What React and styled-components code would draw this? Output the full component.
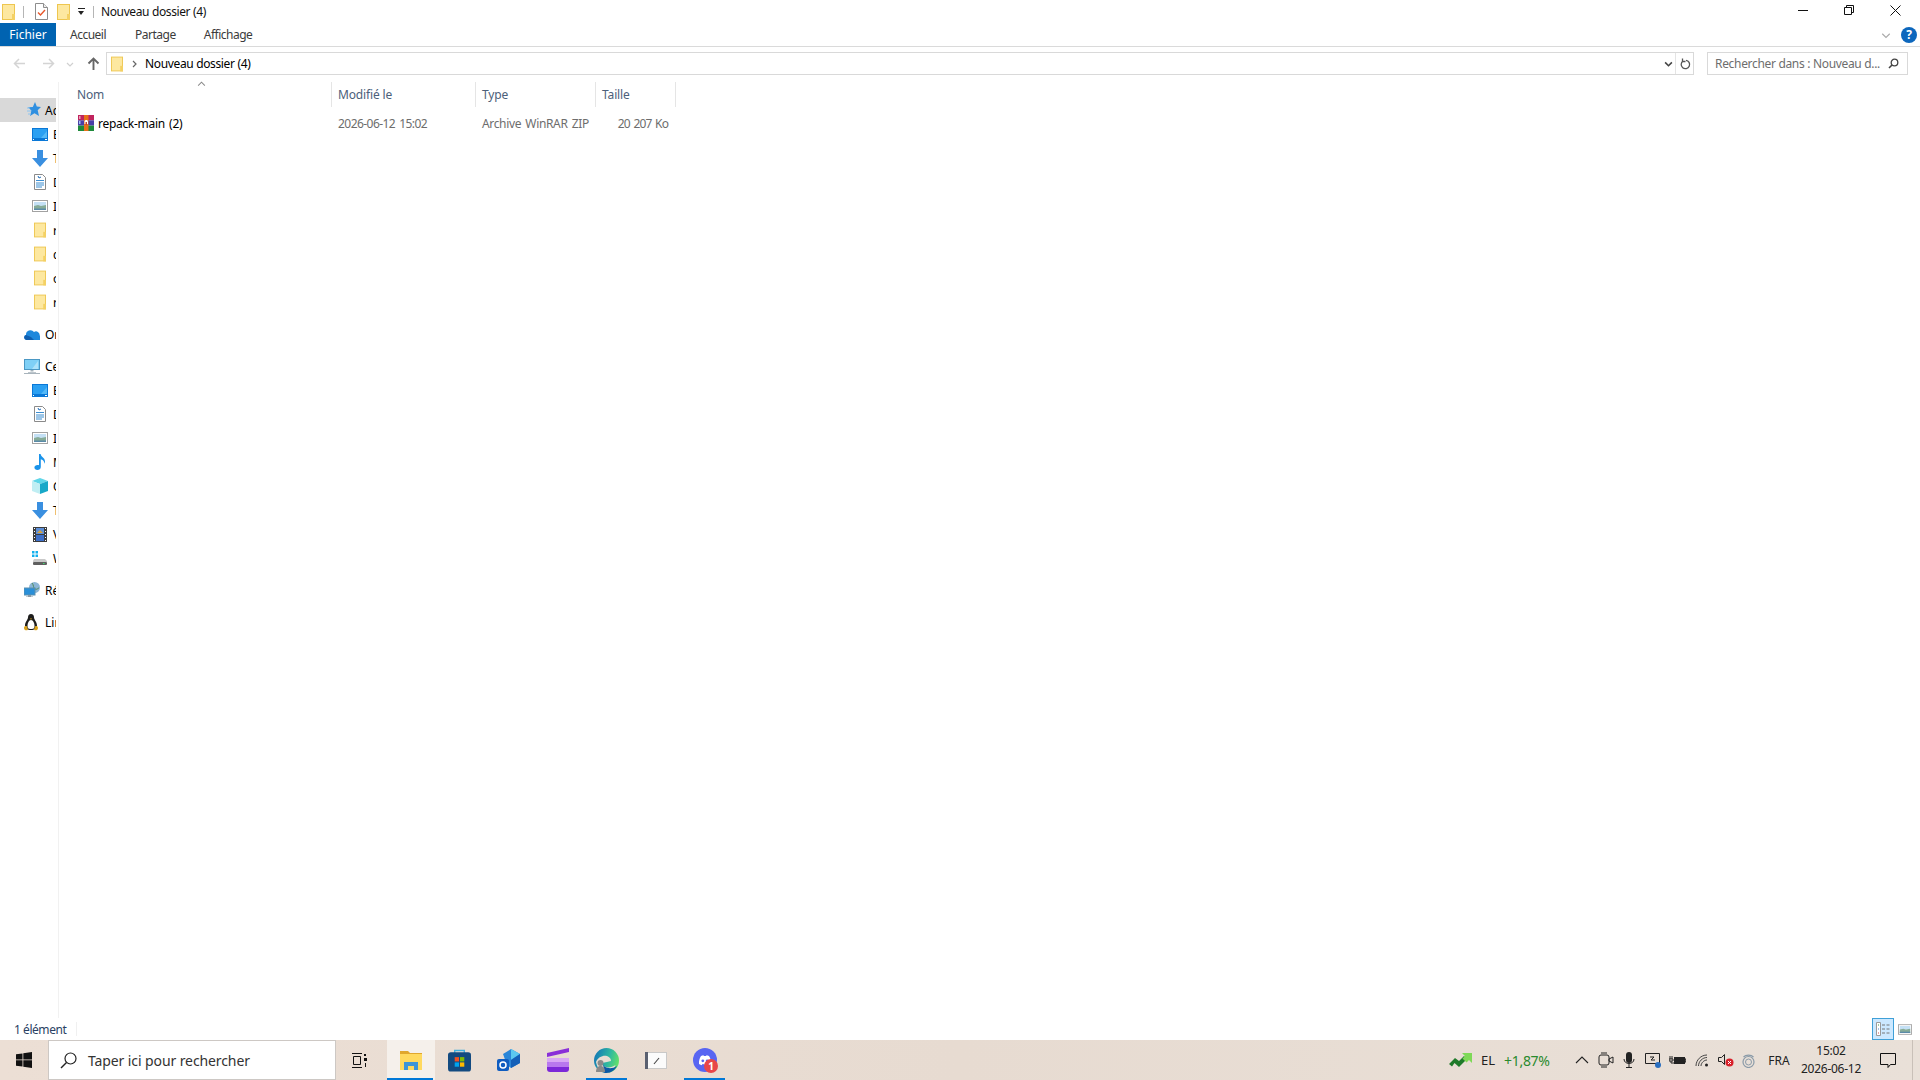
import React from 'react';
import styled, { createGlobalStyle } from 'styled-components';

const GlobalStyle = createGlobalStyle`
  html, body { margin: 0; padding: 0; background: #fff; }
  body { font-family: "Noto Sans", "Open Sans", sans-serif; font-size: 12px; color: #000; }
  #root { width: 1920px; height: 1080px; overflow: hidden; }
  svg { display: block; flex: none; }
`;

/* ---------- drawn icons ---------- */

const FolderIcon = ({ w = 13, h = 16 }) => (
  <svg width={w} height={h} viewBox="0 0 13 16">
    <rect x="0.5" y="0.5" width="12" height="15" fill="#fde8a0" stroke="#eec64f" />
    <rect x="10" y="10" width="3" height="6" fill="#f4d164" />
  </svg>
);

const CheckDocIcon = () => (
  <svg width="13" height="17" viewBox="0 0 13 17">
    <path d="M.5.5h8l4 4v12H.5z" fill="#fff" stroke="#8d8d8d" />
    <path d="M8.500.5v4h4" fill="#eee" stroke="#8d8d8d" />
    <path d="M3 9.500l2.500 2.500L10 7" fill="none" stroke="#e8572a" strokeWidth="1.400" />
  </svg>
);

const StarIcon = () => (
  <svg width="17" height="16" viewBox="0 0 17 16">
    <path d="M11 0l1.800 4.600L17 5l-3.300 3.300L15 14l-4.500-2.800L6 14l1.400-5.500L4 5.300l4.800-.3z" fill="#2f8fe0" />
    <path d="M3 6h3M3 9h4M4 12h3" stroke="#8cc4f0" />
  </svg>
);

const DesktopIcon = () => (
  <svg width="16" height="13" viewBox="0 0 16 13">
    <rect width="16" height="13" fill="#0a78d7" />
    <path d="M1 1h14v9H1z" fill="#2ba0f2" />
    <path d="M9 10l6-7v7z" fill="#55b9f7" />
    <path d="M1 11.500h1M13 11.500h2" stroke="#fff" />
  </svg>
);

const DownloadIcon = () => (
  <svg width="16" height="17" viewBox="0 0 16 17">
    <path d="M5 0h6v8h5l-8 9-8-9h5z" fill="#3a8fe0" />
  </svg>
);

const DocumentIcon = () => (
  <svg width="12" height="16" viewBox="0 0 12 16">
    <path d="M.5.5h8l3 3v12H.5z" fill="#fff" stroke="#8a8a8a" />
    <path d="M2 6.500h8M2 9h8M2 11h8M2 13h6" stroke="#3d8ed0" />
    <path d="M4 2l1 2 2-1" fill="none" stroke="#1f6cb8" />
  </svg>
);

const PictureIcon = ({ w = 16, h = 12 }) => (
  <svg width={w} height={h} viewBox="0 0 16 12">
    <rect x="0.5" y="0.5" width="15" height="11" fill="#fff" stroke="#a2a2a2" />
    <rect x="2" y="2" width="12" height="4" fill="#c4e0f5" />
    <path d="M2 6l4-1 3 1 5-1v5H2z" fill="#86ab97" />
    <path d="M2 8.500h12V10H2z" fill="#5a8aa8" />
  </svg>
);

const OneDriveIcon = () => (
  <svg width="16" height="11" viewBox="0 0 16 11">
    <path d="M2.500 11A2.500 2.500 0 0 1 2 6.100 4.500 4.500 0 0 1 10 3a3.600 3.600 0 0 1 5.600 3.400A2.500 2.500 0 0 1 13.500 11z" fill="#1e88dc" />
    <path d="M2.500 11A2.500 2.500 0 0 1 2 6.100L7 8l3 3z" fill="#0f5fb0" />
  </svg>
);

const MonitorIcon = () => (
  <svg width="16" height="15" viewBox="0 0 16 15">
    <rect x="0.5" y="0.5" width="15" height="10" fill="#7fd0f6" stroke="#4b98c4" />
    <path d="M8 10l6-8v8z" fill="#aee3fa" />
    <path d="M6.500 11h3v1.500h-3z" fill="#a4b2bb" />
    <path d="M4 13h8v.7H4zM0 14h16v1H0z" fill="#a8b4bc" />
  </svg>
);

const MusicIcon = () => (
  <svg width="12" height="16" viewBox="0 0 12 16">
    <path d="M5 0h1.600c.4 3 4.400 3.600 4.400 7.500 0 1-.3 1.700-.7 2.300.2-3-2-4-3.500-4.500V13c0 1.800-1.500 3-3.400 3C1.700 16 .4 15 .4 13.600c0-1.500 1.500-2.600 3.100-2.600.6 0 1.100.1 1.500.3z" fill="#1a93ea" />
  </svg>
);

const CubeIcon = () => (
  <svg width="16" height="16" viewBox="0 0 16 16">
    <path d="M8 0l8 3-8 3-8-3z" fill="#5fd6e8" />
    <path d="M0 3l8 3v10l-8-3z" fill="#c0eef3" />
    <path d="M16 3L8 6v10l8-3z" fill="#17a8c8" />
  </svg>
);

const VideoIcon = () => (
  <svg width="14" height="15" viewBox="0 0 14 15">
    <rect width="14" height="15" fill="#3c3c3c" />
    <rect x="3" y="1" width="8" height="6" fill="#5d8fd8" />
    <rect x="3" y="8" width="8" height="6" fill="#3d6fc8" />
    <path d="M4 6l3-3 3 3z" fill="#d8a23a" />
    <path d="M1 1.500h1M1 4.500h1M1 7.500h1M1 10.500h1M1 13.500h1M12 1.500h1M12 4.500h1M12 7.500h1M12 10.500h1M12 13.500h1" stroke="#fff" />
  </svg>
);

const DriveIcon = () => (
  <svg width="15" height="14" viewBox="0 0 15 14">
    <path d="M0 0h2.500v2.500H0zM3.500 0H6v2.500H3.500zM0 3.500h2.500V6H0zM3.500 3.500H6V6H3.500z" fill="#12b0ee" />
    <path d="M2 8h11l2 2v1H1v-1z" fill="#c9c9c9" />
    <rect x="1" y="11" width="14" height="3" rx="1" fill="#5f5f5f" />
    <rect x="11" y="12" width="1.500" height="1" fill="#3fe070" />
  </svg>
);

const NetworkIcon = () => (
  <svg width="16" height="16" viewBox="0 0 16 16">
    <circle cx="10.500" cy="5.500" r="5.500" fill="#8cb6d6" />
    <path d="M8 1c2 2 1 5 3 6s3-1 4-1" fill="none" stroke="#4e8a5a" />
    <rect x="0" y="6" width="11" height="7" fill="#2a8fd8" stroke="#5a8fb0" />
    <path d="M4 13h3v1.500h2V15H2v-.5h2z" fill="#8a9aa5" />
  </svg>
);

const PenguinIcon = () => (
  <svg width="14" height="17" viewBox="0 0 14 17">
    <path d="M7 0c2 0 3 1.500 3 3.500 0 2 3 4.500 3 8 0 3-2.500 4.500-6 4.500s-6-1.500-6-4.500c0-3.500 3-6 3-8C4 1.500 5 0 7 0z" fill="#1d1d1d" />
    <path d="M7 6c2 0 3.500 3 3.500 6S8.500 15 7 15s-3.500 0-3.500-3S5 6 7 6z" fill="#fff" />
    <path d="M0 14c0-2 2-2.500 3-1.500l1 3c-1 1.500-4 1-4-1.500zM14 14c0-2-2-2.500-3-1.500l-1 3c1 1.500 4 1 4-1.500z" fill="#d9a21e" />
    <path d="M5.800 4.500h2.400L7 5.800z" fill="#d9a21e" />
  </svg>
);

const WinrarIcon = () => (
  <svg width="16" height="16" viewBox="0 0 16 16">
    <rect y="0" width="16" height="5.300" fill="#c0245e" />
    <rect y="5.300" width="16" height="5.300" fill="#4a3fa8" />
    <rect y="10.600" width="16" height="5.400" fill="#1f8a3b" />
    <rect x="1" y="1" width="1.500" height="3" fill="#e8a0b8" />
    <rect x="1" y="6" width="1.500" height="3" fill="#a0c0f0" />
    <rect x="6" y="0" width="4.500" height="16" fill="#e8701a" />
    <path d="M6.500 9V6.500c0-2 3.500-2 3.500 0V9z" fill="#fff" />
    <rect x="7.500" y="7" width="1.500" height="3" fill="#c8402a" />
  </svg>
);

const Chevron = ({ dir = 'right', size = 8, color = '#777', weight = 1.2 }) => {
  const paths = { right: 'M3 1l3 3-3 3', down: 'M1 3l3 3 3-3', up: 'M1 5l3-3 3 3' };
  return (
    <svg width={size} height={size} viewBox="0 0 8 8">
      <path d={paths[dir]} fill="none" stroke={color} strokeWidth={weight} />
    </svg>
  );
};

const ArrowIcon = ({ dir, color, weight = 1.5 }) => {
  const d = {
    left: 'M12 6.500H2M6 2L1.500 6.500 6 11',
    right: 'M1 6.500h10M7 2l4.500 4.500L7 11',
    up: 'M6.500 13V2M1.500 6.500l5-5 5 5',
  }[dir];
  return (
    <svg width="13" height="13" viewBox="0 0 13 13">
      <path d={d} fill="none" stroke={color} strokeWidth={weight} />
    </svg>
  );
};

/* ---------- layout ---------- */

const Screen = styled.div`
  width: 1920px;
  height: 1080px;
  display: flex;
  flex-direction: column;
  background: #fff;
`;

const TitleBar = styled.div`
  height: 23px;
  display: flex;
  align-items: center;
  flex: none;
`;

const QuickIcons = styled.div`
  display: flex;
  align-items: center;
  padding-left: 2px;
`;

const Sep = styled.div`
  width: 1px;
  height: 12px;
  background: #b5b5b5;
  margin: ${(p) => p.$margin || '0 8px'};
`;

const Spacer = styled.div`
  width: ${(p) => p.$w}px;
`;

const Caret = styled.div`
  width: 7px;
  height: 6px;
  margin-left: 8px;
  border-top: 1px solid #222;
  position: relative;
  &::after {
    content: '';
    position: absolute;
    left: 0;
    top: 2px;
    border-left: 3.500px solid transparent;
    border-right: 3.500px solid transparent;
    border-top: 4px solid #222;
  }
`;

const WindowTitle = styled.div`
  color: #111;
  font-size: 12px;
  letter-spacing: -0.38px;
`;

const WindowControls = styled.div`
  margin-left: auto;
  display: flex;
  height: 23px;
  padding-right: 2px;
`;

const WinBtn = styled.div`
  width: 46px;
  height: 20px;
  display: flex;
  align-items: center;
  justify-content: center;
`;

const Ribbon = styled.div`
  height: 23px;
  flex: none;
  display: flex;
  align-items: center;
  border-bottom: 1px solid #dadada;
`;

const FileTab = styled.div`
  width: 56px;
  height: 23px;
  background: #0063b1;
  color: #fff;
  display: flex;
  align-items: center;
  justify-content: center;
`;

const Tab = styled.div`
  color: #3b3b3b;
  margin-left: ${(p) => p.$left}px;
  font-size: 12px;
  letter-spacing: -0.5px;
`;

const RibbonRight = styled.div`
  margin-left: auto;
  display: flex;
  align-items: center;
  gap: 10px;
  padding-right: 3px;
`;

const HelpDot = styled.div`
  width: 16px;
  height: 16px;
  border-radius: 50%;
  background: #0d67bd;
  color: #fff;
  font-weight: 700;
  font-size: 12px;
  display: flex;
  align-items: center;
  justify-content: center;
`;

const AddressRow = styled.div`
  height: 35px;
  flex: none;
  display: flex;
  align-items: center;
  padding-bottom: 2px;
  box-sizing: border-box;
`;

const NavArrows = styled.div`
  width: 106px;
  flex: none;
  display: flex;
  align-items: center;
  padding-left: 13px;
  box-sizing: border-box;
`;

const NavSlot = styled.div`
  margin-right: ${(p) => p.$gap}px;
`;

const AddressBox = styled.div`
  width: 1588px;
  height: 23px;
  box-sizing: border-box;
  border: 1px solid #d9d9d9;
  display: flex;
  align-items: center;
  padding-left: 4px;
  letter-spacing: -0.35px;
  flex: none;
`;

const Crumb = styled.div`
  margin: 0 7px;
`;

const AddressEnd = styled.div`
  margin-left: auto;
  height: 100%;
  display: flex;
  align-items: center;
`;

const AddressDrop = styled.div`
  width: 22px;
  box-sizing: border-box;
  display: flex;
  justify-content: center;
  padding-left: 8px;
`;

const Refresh = styled.div`
  width: 17px;
  height: 100%;
  border-left: 1px solid #e4e4e4;
  display: flex;
  align-items: center;
  justify-content: center;
`;

const SearchBox = styled.div`
  width: 201px;
  height: 23px;
  margin-left: 13px;
  box-sizing: border-box;
  border: 1px solid #d9d9d9;
  display: flex;
  align-items: center;
  justify-content: space-between;
  padding: 0 8px 0 7px;
  color: #6d6d6d;
  font-size: 12px;
  letter-spacing: -0.32px;
  flex: none;
`;

const Body = styled.div`
  flex: 1;
  min-height: 0;
  display: flex;
`;

const Sidebar = styled.div`
  width: 56px;
  flex: none;
  padding-top: 16px;
  overflow: hidden;
  box-sizing: border-box;
  display: flex;
  flex-direction: column;
  gap: 8px;
`;

const NavGroup = styled.div`
  display: flex;
  flex-direction: column;
`;

const NavRow = styled.div`
  height: 24px;
  display: flex;
  align-items: center;
  white-space: nowrap;
  padding-left: ${(p) => (p.$sub ? 32 : 24)}px;
  background: ${(p) => (p.$active ? '#d9d9d9' : 'transparent')};
  font-size: 12px;
`;

const NavIcon = styled.div`
  width: 21px;
  flex: none;
  display: flex;
  justify-content: ${(p) => (p.$center ? 'center' : 'flex-start')};
  padding-right: ${(p) => (p.$center ? 5 : 0)}px;
  box-sizing: border-box;
`;

const Main = styled.div`
  flex: 1;
  margin-left: 2px;
  border-left: 1px solid #f1f1f1;
  position: relative;
  padding-left: 7px;
`;

const SortMark = styled.div`
  position: absolute;
  left: 138px;
  top: -2px;
`;

const ListGrid = styled.div`
  display: grid;
  grid-template-columns: 266px 144px 120px 80px;
  width: 610px;
`;

const HeadCell = styled.div`
  height: 25px;
  display: flex;
  align-items: center;
  padding-left: ${(p) => p.$pad}px;
  color: #4c607a;
  border-right: 1px solid #e5e5e5;
  font-size: 12px;
  letter-spacing: -0.15px;
  box-sizing: border-box;
`;

const Cell = styled.div`
  height: 22px;
  margin-top: 5px;
  display: flex;
  align-items: center;
  justify-content: ${(p) => (p.$right ? 'flex-end' : 'flex-start')};
  padding: ${(p) => (p.$right ? '0 8px 0 0' : `0 0 0 ${p.$pad}px`)};
  color: ${(p) => (p.$dim ? '#6d6d6d' : '#000')};
  gap: 4px;
  font-size: 12px;
  letter-spacing: ${(p) => p.$track}px;
  word-spacing: 1.5px;
  white-space: nowrap;
`;

const StatusBar = styled.div`
  height: 22px;
  flex: none;
  display: flex;
  align-items: center;
  padding-left: 14px;
  color: #2a3f63;
  font-size: 12px;
  letter-spacing: -0.45px;
`;

const StatusSep = styled.div`
  width: 1px;
  height: 14px;
  background: #f0f0f0;
  margin-left: 10px;
`;

const ViewBtns = styled.div`
  margin-left: auto;
  display: flex;
  align-items: center;
  gap: 4px;
  padding-right: 8px;
`;

const ViewBtn = styled.div`
  width: 22px;
  height: 22px;
  box-sizing: border-box;
  background: #cce8ff;
  border: 1px solid #3fa0d8;
  display: flex;
  align-items: center;
  justify-content: center;
`;

const Taskbar = styled.div`
  height: 40px;
  flex: none;
  background: linear-gradient(90deg, #ecdfd5, #e7dbd1 50%, #e9e0d8);
  display: flex;
  align-items: center;
`;

const StartBtn = styled.div`
  width: 48px;
  height: 40px;
  display: flex;
  align-items: center;
  justify-content: center;
  flex: none;
`;

const SearchField = styled.div`
  width: 288px;
  height: 40px;
  box-sizing: border-box;
  border: 1px solid #cdc8c4;
  background: #fff;
  display: flex;
  align-items: center;
  gap: 11px;
  padding-left: 11px;
  color: #333;
  font-size: 14px;
  letter-spacing: -0.1px;
  flex: none;
`;

const TaskView = styled.div`
  width: 51px;
  padding-right: 5px;
  box-sizing: border-box;
  display: flex;
  justify-content: center;
  flex: none;
`;

const Apps = styled.div`
  display: flex;
  height: 40px;
`;

const AppBtn = styled.div`
  width: ${(p) => p.$w || 49}px;
  height: 40px;
  box-sizing: border-box;
  position: relative;
  display: flex;
  align-items: center;
  justify-content: center;
  background: ${(p) => (p.$active ? '#f5f0eb' : 'transparent')};
  &::after {
    content: '';
    display: ${(p) => (p.$running ? 'block' : 'none')};
    position: absolute;
    left: 4px;
    right: 4px;
    ${(p) => p.$active && 'left: 0; right: 2px;'}
    bottom: 0;
    height: 2px;
    background: #0078d7;
  }
`;

const Badge = styled.div`
  position: absolute;
  left: 24px;
  top: 19px;
  width: 14px;
  height: 14px;
  border-radius: 50%;
  background: #e8464a;
  color: #fff;
  font-size: 10px;
  font-weight: 700;
  display: flex;
  align-items: center;
  justify-content: center;
`;

const Tray = styled.div`
  margin-left: auto;
  display: flex;
  align-items: center;
  height: 40px;
`;

const StockGroup = styled.div`
  display: flex;
  align-items: center;
  width: 121px;
  font-size: 13px;
  color: #222;
  flex: none;
`;

const StockMark = styled.div`
  margin-right: 9px;
`;

const StockValue = styled.span`
  color: #2a8a2e;
  margin-left: 9px;
  font-size: 14px;
  letter-spacing: -0.3px;
`;

const TraySlot = styled.div`
  width: ${(p) => p.$w}px;
  height: 40px;
  display: flex;
  align-items: center;
  justify-content: center;
  flex: none;
  font-size: 12px;
  color: #222;
`;

const Clock = styled.div`
  width: 66px;
  text-align: center;
  font-size: 12px;
  line-height: 18px;
  letter-spacing: -0.25px;
  color: #222;
  flex: none;
`;

const ShowDesktop = styled.div`
  width: 8px;
  height: 40px;
  border-left: 1px solid #c9c0b8;
  box-sizing: border-box;
  flex: none;
`;

const quickAccess = [
  { icon: <DesktopIcon />, label: 'Bureau' },
  { icon: <DownloadIcon />, label: 'Téléchargements' },
  { icon: <DocumentIcon />, label: 'Documents', center: true },
  { icon: <PictureIcon />, label: 'Images' },
  { icon: <FolderIcon w={12} h={16} />, label: 'repack', center: true },
  { icon: <FolderIcon w={12} h={16} />, label: 'config', center: true },
  { icon: <FolderIcon w={12} h={16} />, label: 'outils', center: true },
  { icon: <FolderIcon w={12} h={16} />, label: 'repack', center: true },
];

const thisPc = [
  { icon: <DesktopIcon />, label: 'Bureau' },
  { icon: <DocumentIcon />, label: 'Documents', center: true },
  { icon: <PictureIcon />, label: 'Images' },
  { icon: <MusicIcon />, label: 'Musique', center: true },
  { icon: <CubeIcon />, label: 'Objets 3D' },
  { icon: <DownloadIcon />, label: 'Téléchargements' },
  { icon: <VideoIcon />, label: 'Vidéos', center: true },
  { icon: <DriveIcon />, label: 'Windows (C:)' },
];

const TopRow = ({ icon, label, active }) => (
  <NavRow $active={active}>
    <NavIcon>{icon}</NavIcon>
    {label}
  </NavRow>
);

const SubRows = ({ items }) =>
  items.map((item, i) => (
    <NavRow $sub key={i}>
      <NavIcon $center={item.center}>{item.icon}</NavIcon>
      {item.label}
    </NavRow>
  ));

const App = () => (
  <Screen>
    <GlobalStyle />
    <TitleBar>
      <QuickIcons>
        <FolderIcon />
        <Sep $margin="0 11px 0 8px" />
        <CheckDocIcon />
        <Spacer $w={9} />
        <FolderIcon />
        <Caret />
        <Sep $margin="0 7px 0 8px" />
      </QuickIcons>
      <WindowTitle>Nouveau dossier (4)</WindowTitle>
      <WindowControls>
        <WinBtn>
          <svg width="10" height="1"><rect width="10" height="1" fill="#111" /></svg>
        </WinBtn>
        <WinBtn>
          <svg width="10" height="10" viewBox="0 0 10 10">
            <path d="M2.500 2.500V.5h7v7h-2M.5 2.500h7v7h-7z" fill="none" stroke="#111" />
          </svg>
        </WinBtn>
        <WinBtn>
          <svg width="11" height="11" viewBox="0 0 11 11">
            <path d="M.5.5l10 10M10.500.5l-10 10" stroke="#111" />
          </svg>
        </WinBtn>
      </WindowControls>
    </TitleBar>

    <Ribbon>
      <FileTab>Fichier</FileTab>
      <Tab $left={14}>Accueil</Tab>
      <Tab $left={29}>Partage</Tab>
      <Tab $left={28}>Affichage</Tab>
      <RibbonRight>
        <Chevron dir="down" size={10} color="#aaa" weight={0.9} />
        <HelpDot>?</HelpDot>
      </RibbonRight>
    </Ribbon>

    <AddressRow>
      <NavArrows>
        <NavSlot $gap={16}><ArrowIcon dir="left" color="#d4d4d4" /></NavSlot>
        <NavSlot $gap={11}><ArrowIcon dir="right" color="#d4d4d4" /></NavSlot>
        <NavSlot $gap={13}><Chevron dir="down" size={8} color="#d0d0d0" /></NavSlot>
        <ArrowIcon dir="up" color="#666" weight={1.9} />
      </NavArrows>
      <AddressBox>
        <FolderIcon w={12} h={16} />
        <Crumb><Chevron dir="right" color="#666" /></Crumb>
        Nouveau dossier (4)
        <AddressEnd>
          <AddressDrop><Chevron dir="down" size={9} color="#444" weight={1.4} /></AddressDrop>
          <Refresh>
            <svg width="12" height="12" viewBox="0 0 12 12">
              <path d="M4 3a4.200 4.200 0 1 0 3-.7" fill="none" stroke="#555" strokeWidth="1.300" />
              <path d="M3.500.5v3h3" fill="none" stroke="#555" strokeWidth="1.300" />
            </svg>
          </Refresh>
        </AddressEnd>
      </AddressBox>
      <SearchBox>
        Rechercher dans : Nouveau d...
        <svg width="11" height="11" viewBox="0 0 11 11">
          <circle cx="6.500" cy="4.500" r="3.300" fill="none" stroke="#444" strokeWidth="1.300" />
          <path d="M4 7L1 10" stroke="#444" strokeWidth="1.600" />
        </svg>
      </SearchBox>
    </AddressRow>

    <Body>
      <Sidebar>
        <NavGroup>
          <TopRow active icon={<StarIcon />} label="Accès rapide" />
          <SubRows items={quickAccess} />
        </NavGroup>
        <NavGroup>
          <TopRow icon={<OneDriveIcon />} label="OneDrive" />
        </NavGroup>
        <NavGroup>
          <TopRow icon={<MonitorIcon />} label="Ce PC" />
          <SubRows items={thisPc} />
        </NavGroup>
        <NavGroup>
          <TopRow icon={<NetworkIcon />} label="Réseau" />
        </NavGroup>
        <NavGroup>
          <TopRow icon={<PenguinIcon />} label="Linux" />
        </NavGroup>
      </Sidebar>

      <Main>
        <SortMark><Chevron dir="up" size={9} color="#888" weight={0.9} /></SortMark>
        <ListGrid>
          <HeadCell $pad={11}>Nom</HeadCell>
          <HeadCell $pad={6}>Modifié le</HeadCell>
          <HeadCell $pad={6}>Type</HeadCell>
          <HeadCell $pad={6}>Taille</HeadCell>
          <Cell $pad={12} $track={-0.3}><WinrarIcon />repack-main (2)</Cell>
          <Cell $pad={6} $track={-0.55} $dim>2026-06-12 15:02</Cell>
          <Cell $pad={6} $track={-0.35} $dim>Archive WinRAR ZIP</Cell>
          <Cell $right $track={-0.9} $dim>20 207 Ko</Cell>
        </ListGrid>
      </Main>
    </Body>

    <StatusBar>
      1 élément
      <StatusSep />
      <ViewBtns>
        <ViewBtn>
          <svg width="16" height="16" viewBox="0 0 16 16">
            <path d="M1.500 1.500h4v13h-4z" fill="#fff" stroke="#9a9a9a" />
            <path d="M3 3.500h1v1H3z" fill="#4a9a4a" />
            <path d="M3 7.500h1v1H3z" fill="#4a80d0" />
            <path d="M3 11.500h1v1H3z" fill="#d04a4a" />
            <path d="M7 4h3M11.500 4h3M7 8h3M11.500 8h3M7 12h3M11.500 12h3" stroke="#777" />
          </svg>
        </ViewBtn>
        <PictureIcon w={14} h={11} />
      </ViewBtns>
    </StatusBar>

    <Taskbar>
      <StartBtn>
        <svg width="16" height="16" viewBox="0 0 16 16">
          <path d="M0 2.300L6.500 1.400V7.500H0zM7.300 1.300L16 0v7.500H7.300zM0 8.300h6.500v6.300L0 13.700zM7.300 8.300H16V16l-8.700-1.300z" fill="#111" />
        </svg>
      </StartBtn>
      <SearchField>
        <svg width="17" height="17" viewBox="0 0 17 17">
          <circle cx="10.500" cy="6.500" r="5.500" fill="none" stroke="#222" strokeWidth="1.200" />
          <path d="M6.500 10.500L1 16" stroke="#222" strokeWidth="1.400" />
        </svg>
        Taper ici pour rechercher
      </SearchField>
      <TaskView>
        <svg width="16" height="15" viewBox="0 0 16 15">
          <path d="M1 .5h10M1 14.500h10M2.500 3.500h7v8h-7z" fill="none" stroke="#111" />
          <path d="M13 1h2v2h-2zM13 5h3v3h-3z" fill="#111" />
          <path d="M14 10h1v4h-1z" fill="#111" />
        </svg>
      </TaskView>
      <Apps>
        <AppBtn $active $running $w={48}>
          <svg width="22" height="19" viewBox="0 0 22 19">
            <path d="M0 0h8l2 2h12v4H0z" fill="#e0a72e" />
            <path d="M0 3h22v16H0z" fill="#ffd95f" />
            <path d="M4 11h14v8h-4v-4H8v4H4z" fill="#3d95d8" />
          </svg>
        </AppBtn>
        <AppBtn>
          <svg width="23" height="24" viewBox="0 0 24 24">
            <path d="M7 5V2h10v3" fill="none" stroke="#3fb0e0" strokeWidth="1.500" />
            <rect y="4" width="24" height="20" rx="3" fill="#134a80" />
            <rect x="7" y="9" width="4.500" height="4.500" fill="#f25022" />
            <rect x="12.500" y="9" width="4.500" height="4.500" fill="#7fba00" />
            <rect x="7" y="14.500" width="4.500" height="4.500" fill="#00a4ef" />
            <rect x="12.500" y="14.500" width="4.500" height="4.500" fill="#ffb900" />
          </svg>
        </AppBtn>
        <AppBtn>
          <svg width="24" height="24" viewBox="0 0 24 24">
            <path d="M6 6l8-5 9 5v9l-9 5-4-3z" fill="#2a86d8" />
            <path d="M14 1l9 5-9 6z" fill="#5cc8f0" />
            <path d="M14 12l9-6v9l-9 5z" fill="#1560b8" />
            <rect y="11" width="12" height="12" rx="2" fill="#0f5cc0" />
            <circle cx="6" cy="17" r="3" fill="none" stroke="#fff" strokeWidth="1.500" />
          </svg>
        </AppBtn>
        <AppBtn>
          <svg width="22" height="24" viewBox="0 0 22 24">
            <path d="M0 5l22-5v4L0 9z" fill="#8a2fd8" />
            <rect y="10" width="22" height="4" fill="#d8a8f5" />
            <rect y="14" width="22" height="5" fill="#b878ee" />
            <path d="M0 19h22v2a3 3 0 0 1-3 3H3a3 3 0 0 1-3-3z" fill="#7c28d8" />
          </svg>
        </AppBtn>
        <AppBtn $running>
          <svg width="25" height="25" viewBox="0 0 25 25">
            <defs>
              <linearGradient id="edgeTop" x1="0" y1="0.2" x2="1" y2="0.5">
                <stop offset="0" stopColor="#1375b8" />
                <stop offset="0.6" stopColor="#2fb8a0" />
                <stop offset="1" stopColor="#62e06a" />
              </linearGradient>
            </defs>
            <circle cx="12.500" cy="12.500" r="12.500" fill="url(#edgeTop)" />
            <path d="M2 14c2-5 7-7 11-6 3 1 4 3 4 5l-4 1-5 1c0 1 .5 2 1.500 3 3 2 8 2 12-1-1 4-5 8-9 8-5 0-9-4-10.500-11z" fill="#e8ddd3" />
            <path d="M9 16c1 4 8 6 14 2-2 4-6 7-10.500 7-2 0-3-.5-4-1 2-2 1-5 .5-8z" fill="#0c59a4" />
            <circle cx="6.500" cy="15" r="3" fill="#8a8a8a" />
            <path d="M2 24c0-4 1.800-6 4.500-6s4.500 2 4.500 6z" fill="#8a8a8a" />
          </svg>
        </AppBtn>
        <AppBtn>
          <svg width="22" height="17" viewBox="0 0 22 17">
            <rect x="0.5" y="0.5" width="21" height="16" fill="#fbfbfb" stroke="#c9c9c9" />
            <rect width="3" height="17" fill="#5a6070" />
            <path d="M9 12l5-6" stroke="#444" strokeWidth="1.100" />
          </svg>
        </AppBtn>
        <AppBtn $running>
          <svg width="24" height="24" viewBox="0 0 24 24">
            <circle cx="12" cy="12" r="12" fill="#5865f2" />
            <path d="M6 16c-.2-3 .5-6 2-8 1-.5 2-.7 2.500-.7l.3.7h2.400l.3-.7c.5 0 1.500.2 2.500.7 1.500 2 2.200 5 2 8-1 .7-2 1.200-3 1.300l-.7-1.200c-2 .5-2.800.5-4.800 0L8.700 17.300C8 17.200 7 16.700 6 16z" fill="#fff" />
            <circle cx="9.800" cy="12.800" r="1.400" fill="#5865f2" />
            <circle cx="14.200" cy="12.800" r="1.400" fill="#5865f2" />
          </svg>
          <Badge>1</Badge>
        </AppBtn>
      </Apps>

      <Tray>
        <StockGroup>
          <StockMark>
            <svg width="23" height="14" viewBox="0 0 23 14">
              <path d="M0 11l6-6 4 3 5-5 3 3-8 8-4.500-4L3 13.500z" fill="#1f7a2a" />
              <path d="M13 0h10v10l-3-3-2.500 2.500-4-4L16 3z" fill="#7ed957" />
            </svg>
          </StockMark>
          EL
          <StockValue>+1,87%</StockValue>
        </StockGroup>
        <TraySlot $w={24}>
          <svg width="14" height="8" viewBox="0 0 14 8"><path d="M1 7l6-6 6 6" fill="none" stroke="#222" strokeWidth="1.100" /></svg>
        </TraySlot>
        <TraySlot $w={23}>
          <svg width="16" height="16" viewBox="0 0 16 16">
            <rect x="1" y="3" width="10" height="10" rx="2" fill="none" stroke="#222" />
            <path d="M11 7l4-2v6l-4-2zM3 1h6M3 15h6" fill="none" stroke="#222" />
          </svg>
        </TraySlot>
        <TraySlot $w={23}>
          <svg width="12" height="16" viewBox="0 0 12 16">
            <rect x="3" y="0" width="6" height="11" rx="3" fill="#222" />
            <path d="M1 7c0 6 10 6 10 0M6 12v3M3 15.500h6" fill="none" stroke="#222" />
          </svg>
        </TraySlot>
        <TraySlot $w={25}>
          <svg width="16" height="16" viewBox="0 0 16 16">
            <path d="M.5 1.500h14v10h-14z" fill="none" stroke="#222" />
            <path d="M5 5h4l-2 2M10 8H6l2-2" fill="none" stroke="#222" />
            <circle cx="13" cy="13" r="3" fill="#2a6fc0" />
          </svg>
        </TraySlot>
        <TraySlot $w={25}>
          <svg width="17" height="11" viewBox="0 0 17 11">
            <rect x="5" y="2" width="11" height="7" fill="#222" />
            <path d="M16 4h1v3h-1zM1 1v3M3 1v3M0 4h4v2H0zM2 6v2h3" stroke="#222" fill="none" />
          </svg>
        </TraySlot>
        <TraySlot $w={24}>
          <svg width="14" height="13" viewBox="0 0 14 13">
            <path d="M1 12C1 6 6 1 12 1M3.500 12c0-4.500 4-8.500 8.500-8.500M6 12c0-3 3-6 6-6" fill="none" stroke="#444" />
            <circle cx="11.500" cy="11" r="1.500" fill="#222" />
          </svg>
        </TraySlot>
        <TraySlot $w={23}>
          <svg width="16" height="14" viewBox="0 0 16 14">
            <path d="M0.500 4.500h3l3-3v10l-3-3h-3z" fill="none" stroke="#222" />
            <circle cx="11.500" cy="9.500" r="4" fill="#d8202a" />
            <path d="M10 8l3 3M13 8l-3 3" stroke="#fff" />
          </svg>
        </TraySlot>
        <TraySlot $w={23}>
          <svg width="13" height="15" viewBox="0 0 13 15">
            <circle cx="6.500" cy="9" r="5.500" fill="none" stroke="#8a9aa8" strokeWidth="1.200" />
            <circle cx="6.500" cy="9" r="3" fill="none" stroke="#8a9aa8" />
            <path d="M1.500 4a6 4 0 0 1 10 0" fill="none" stroke="#8a9aa8" strokeWidth="1.200" />
          </svg>
        </TraySlot>
        <TraySlot $w={38}>FRA</TraySlot>
        <Clock>15:02<br />2026-06-12</Clock>
        <TraySlot $w={48}>
          <svg width="16" height="15" viewBox="0 0 16 15">
            <path d="M.5.5h15v11h-5l-2.500 3v-3H.5z" fill="none" stroke="#111" />
          </svg>
        </TraySlot>
        <ShowDesktop />
      </Tray>
    </Taskbar>
  </Screen>
);

export default App;
